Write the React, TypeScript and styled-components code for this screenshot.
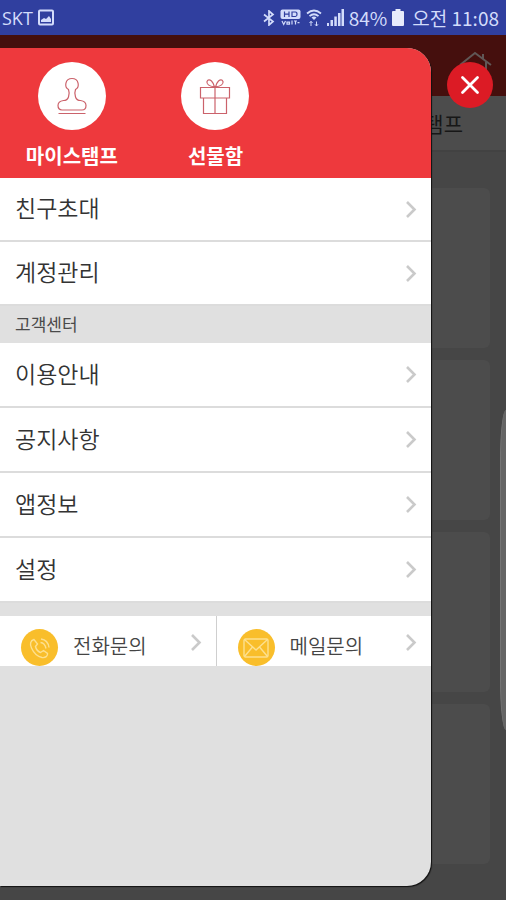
import React from "react";
import styled, { createGlobalStyle } from "styled-components";

const GlobalStyle = createGlobalStyle`
  * { box-sizing: border-box; }
  body {
    margin: 0;
    background: #444;
    font-family: "Noto Sans CJK KR", "Noto Sans", sans-serif;
  }
  button { font: inherit; border: 0; padding: 0; cursor: pointer; }
  a { color: inherit; text-decoration: none; }
  svg { display: block; flex: none; }
`;

const Screen = styled.div`
  display: flex;
  flex-direction: column;
  min-height: 100vh;
  overflow: hidden;
`;

const StatusBar = styled.header`
  display: flex;
  align-items: center;
  justify-content: space-between;
  height: 35px;
  padding: 0 7px 0 2px;
  background: #303f9f;
  color: #d3dcfb;
  font-family: "Open Sans", "Noto Sans CJK KR", sans-serif;
  font-size: 18px;
  line-height: 24px;
`;

const StatusGroup = styled.div`
  display: flex;
  align-items: center;
  gap: 5px;
`;

const Clock = styled.time`
  padding-left: 3px;
  font-family: "Noto Sans CJK KR", sans-serif;
  font-size: 19px;
`;

const Percent = styled.span`
  font-family: "Noto Sans CJK KR", sans-serif;
  font-size: 19px;
`;

const Stage = styled.div`
  position: relative;
  display: flex;
  flex: 1;
  flex-direction: column;
`;

const Backdrop = styled.div`
  display: flex;
  flex: 1;
  flex-direction: column;
  background: #464646;
`;

const AppBar = styled.div`
  display: flex;
  justify-content: flex-end;
  height: 61px;
  padding: 16px 13px 0;
  background: #450f0d;
`;

const TabStrip = styled.div`
  display: flex;
  align-items: center;
  justify-content: flex-end;
  height: 56px;
  padding-right: 43px;
  background: #4c4c4c;
  border-bottom: 2px solid #424242;
  color: #171717;
  font-size: 21px;
`;

const CardList = styled.div`
  display: grid;
  flex: 1;
  grid-template-rows: repeat(4, 1fr);
  gap: 12px;
  padding: 36px 16px;
`;

const Card = styled.div`
  border-radius: 6px;
  background: #4c4c4c;
`;

const EdgeHandle = styled.div`
  position: absolute;
  top: 375px;
  right: 0;
  width: 6px;
  height: 320px;
  border-left: 1px solid #757575;
  border-radius: 6px 0 0 6px / 50px 0 0 50px;
  background: #656565;
`;

const Drawer = styled.aside`
  position: absolute;
  top: 13px;
  bottom: 14px;
  left: 0;
  width: calc(100% - 75px);
  overflow: hidden;
  border-radius: 0 24px 24px 0;
  background: #e0e0e0;
  box-shadow: 1px 1px 1px #111;
`;

const Shortcuts = styled.nav`
  display: grid;
  grid-template-columns: repeat(3, 1fr);
  height: 130px;
  padding-top: 14px;
  background: #ee393d;
`;

const Shortcut = styled.a`
  display: flex;
  flex-direction: column;
  align-items: center;
  gap: 13px;
  color: #fff;
  font-size: 20px;
  font-weight: 700;
  line-height: 26px;
`;

const Disc = styled.span`
  display: grid;
  place-items: center;
  width: 68px;
  height: 68px;
  border-radius: 50%;
  background: #fff;
`;

const MenuLink = styled.a<{ $height: number }>`
  display: flex;
  align-items: center;
  justify-content: space-between;
  height: ${(p) => p.$height}px;
  padding: 0 14px 0 15px;
  border-bottom: 2px solid #dcdcdc;
  background: #fff;
  color: #333;
  font-size: 23px;
  font-weight: 350;
  line-height: 32px;
`;

const MenuText = styled.span`
  padding-bottom: 4px;
`;

const SectionTitle = styled.h2`
  display: flex;
  align-items: center;
  height: 37px;
  margin: 0;
  padding: 0 15px 2px;
  color: #4a4a4a;
  font-size: 17px;
  font-weight: 400;
`;

const Contacts = styled.div`
  display: grid;
  grid-template-columns: 1fr 1fr;
  margin-top: 13px;
`;

const Contact = styled.a`
  display: flex;
  height: 50px;
  gap: 15px;
  padding: 0 14px 0 21px;
  background: #fff;
  color: #444;
  font-size: 20px;
  font-weight: 350;
  line-height: 60px;

  & + & { border-left: 1px solid #cfcfcf; }
`;

const ContactText = styled.span`
  flex: 1;
`;

const ContactDisc = styled.span`
  display: grid;
  place-items: center;
  width: 37px;
  height: 37px;
  margin-top: 13px;
  border-radius: 50%;
  background: #f9be2b;
`;

const ContactArrow = styled.span`
  margin-top: 17px;
`;

const CloseButton = styled.button`
  position: absolute;
  top: 27px;
  right: 13px;
  display: grid;
  place-items: center;
  width: 46px;
  height: 46px;
  border-radius: 50%;
  background: #dc1b25;
`;

const Chevron = () => (
  <svg width="12" height="19" viewBox="0 0 12 19" fill="none" stroke="#cacaca" strokeWidth="2.6">
    <path d="M2 2l7.5 7.5L2 17" />
  </svg>
);

const PictureIcon = () => (
  <svg width="16" height="17" viewBox="0 0 16 17" fill="none" stroke="#d3dcfb" strokeWidth="2">
    <rect x="1" y="1.5" width="14" height="14" rx="1" />
    <path d="M3 13V11l3-2 2 1 3-3 2 3v3z" fill="#d3dcfb" stroke="none" />
  </svg>
);

const BluetoothIcon = () => (
  <svg width="12" height="16" viewBox="0 0 12 16" fill="none" stroke="#d3dcfb" strokeWidth="1.7">
    <path d="M1 4.5l9 7L6 15V1l4 3.5-9 7" />
  </svg>
);

const VolteIcon = () => (
  <svg width="21" height="17" viewBox="0 0 21 17" fill="none">
    <rect x="0.5" y="0.5" width="20" height="9.5" rx="2" fill="#d3dcfb" />
    <path d="M4.5 2.5v5.5M9 2.5v5.5M4.5 5.2H9M12 3h3.5q1.5 0 1.5 2.2T15.5 7.5H12z" stroke="#303f9f" strokeWidth="1.2" />
    <path d="M2 12l1.7 3.5L5.5 12M7 13.2h2.5v2H7zM12 11.5v4M14 12h3M15.5 12v3.5M17.5 13.7h2" stroke="#d3dcfb" strokeWidth="1.2" />
  </svg>
);

const WifiIcon = () => (
  <svg width="16" height="18" viewBox="0 0 16 18" fill="none" stroke="#d3dcfb" strokeWidth="1.8">
    <path d="M1 4.5Q8-1.5 15 4.5M3.5 7.2q4.5-4 9 0" />
    <path d="M5.5 8.5q2.5-2 5 0L8 11z" fill="#d3dcfb" stroke="none" />
    <path d="M5 17v-4.5M3.5 14L5 12.3 6.5 14M10.5 12.5V17M9 15.3l1.5 1.7 1.5-1.7" strokeWidth="1" />
  </svg>
);

const SignalIcon = () => (
  <svg width="17" height="17" viewBox="0 0 17 17" fill="#d3dcfb">
    <path d="M0 14h2v3H0zM3.5 11h2.5v6H3.5zM7.3 7.5h2.5V17H7.3zM11 4h2.5v13H11zM14.5 0H17v17h-2.5z" />
  </svg>
);

const BatteryIcon = () => (
  <svg width="12" height="17" viewBox="0 0 12 17" fill="#e7ebfb">
    <path d="M3.5 0h5v2H11q1 0 1 1v13q0 1-1 1H1q-1 0-1-1V3q0-1 1-1h2.5z" />
  </svg>
);

const HomeIcon = () => (
  <svg width="34" height="34" viewBox="0 0 34 34" fill="none" stroke="#605756" strokeWidth="2">
    <path d="M1 14L16 2l16 12M24 8V3M5 13v18h22V11" />
  </svg>
);

const StampIcon = () => (
  <svg width="30" height="38" viewBox="0 0 30 38" fill="none" stroke="#cb626b" strokeWidth="1.2">
    <path d="M11.5 12.500C7 10 8 1.500 15 1.500s8 8.500 3.500 11c-.8 2-.8 5 0 7.500.8 2.500 2.500 3.500 5 3.500 3.500.5 5.500 2.500 5.500 5s-1.500 4.500-4 4.500H5c-2.500 0-4-2-4-4.500s2-4.500 5.500-5c2.500 0 4.200-1 5-3.500.8-2.500.8-5.500 0-7.500zM1.500 36.500h27" />
  </svg>
);

const GiftIcon = () => (
  <svg width="32" height="36" viewBox="0 0 32 36" fill="none" stroke="#cb626b" strokeWidth="1.2">
    <path d="M1.5 9.5h29V20h-29zM4.500 20v15.500h23V20M16 9.500v26" />
    <path d="M15.5 9Q7 7.500 8 3.500q1.500-3 4.500-.5 2 2 3 6zM16.500 9Q25 7.500 24 3.500q-1.500-3-4.500-.5-2 2-3 6z" />
  </svg>
);

const PhoneIcon = () => (
  <svg width="24" height="24" viewBox="0 0 24 24" fill="none" stroke="#fde08f" strokeWidth="1.4">
    <path d="M6 3.500C2.500 4.500 1.500 8 3.500 12c2 4.500 6 8.500 10.500 9.500 3.500.5 6-1.500 5.500-4l-4-3-3 2c-2.500-1-4.500-3.500-5-6l2-2.500z" />
    <path d="M12.500 6.500q4.500.5 5.500 6M13 3q7 1 8 8.500" />
  </svg>
);

const MailIcon = () => (
  <svg width="26" height="20" viewBox="0 0 26 20" fill="none" stroke="#fde08f" strokeWidth="1.4">
    <rect x="1" y="1" width="24" height="18" rx="1.5" />
    <path d="M1.5 1.5L13 12 24.5 1.5M1.5 18.5l8-9.500M24.500 18.500l-8-9.500" />
  </svg>
);

const CloseIcon = () => (
  <svg width="20" height="20" viewBox="0 0 20 20" stroke="#fff" strokeWidth="2.8" strokeLinecap="round">
    <path d="M2.5 2.5l15 15M17.5 2.5l-15 15" />
  </svg>
);

const MenuRow = ({ label, height }: { label: string; height: number }) => (
  <MenuLink href="#" $height={height}>
    <MenuText>{label}</MenuText>
    <Chevron />
  </MenuLink>
);

const ContactItem = ({ label, icon }: { label: string; icon: React.ReactNode }) => (
  <Contact href="#">
    <ContactDisc>{icon}</ContactDisc>
    <ContactText>{label}</ContactText>
    <ContactArrow>
      <Chevron />
    </ContactArrow>
  </Contact>
);

const accountItems = ["친구초대", "계정관리"];
const supportItems = ["이용안내", "공지사항", "앱정보", "설정"];

export default function App() {
  return (
    <Screen>
      <GlobalStyle />
      <StatusBar>
        <StatusGroup>
          <span>SKT</span>
          <PictureIcon />
        </StatusGroup>
        <StatusGroup>
          <BluetoothIcon />
          <VolteIcon />
          <WifiIcon />
          <SignalIcon />
          <Percent>84%</Percent>
          <BatteryIcon />
          <Clock>오전 11:08</Clock>
        </StatusGroup>
      </StatusBar>
      <Stage>
        <Backdrop>
          <AppBar>
            <HomeIcon />
          </AppBar>
          <TabStrip>스탬프</TabStrip>
          <CardList>
            <Card />
            <Card />
            <Card />
            <Card />
          </CardList>
        </Backdrop>
        <EdgeHandle />
        <Drawer>
          <Shortcuts>
            <Shortcut href="#">
              <Disc>
                <StampIcon />
              </Disc>
              마이스탬프
            </Shortcut>
            <Shortcut href="#">
              <Disc>
                <GiftIcon />
              </Disc>
              선물함
            </Shortcut>
          </Shortcuts>
          <nav>
            {accountItems.map((label) => (
              <MenuRow key={label} label={label} height={64} />
            ))}
            <SectionTitle>고객센터</SectionTitle>
            {supportItems.map((label) => (
              <MenuRow key={label} label={label} height={65} />
            ))}
          </nav>
          <Contacts>
            <ContactItem label="전화문의" icon={<PhoneIcon />} />
            <ContactItem label="메일문의" icon={<MailIcon />} />
          </Contacts>
        </Drawer>
        <CloseButton aria-label="닫기">
          <CloseIcon />
        </CloseButton>
      </Stage>
    </Screen>
  );
}
